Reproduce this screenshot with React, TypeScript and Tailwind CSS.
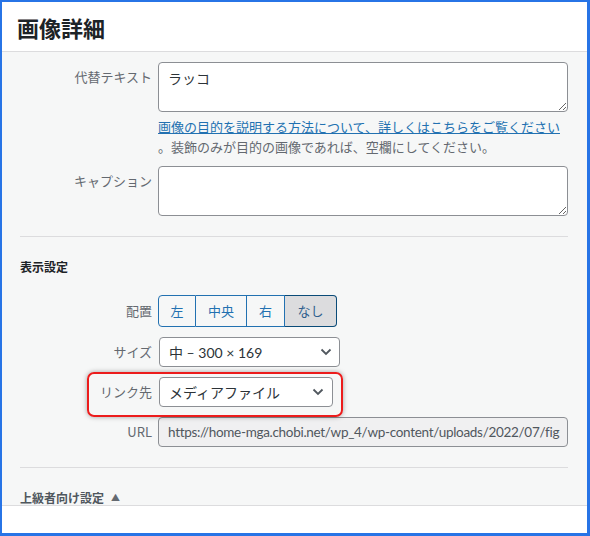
import React from "react";

const FONT = '"Noto Sans CJK JP", "Noto Sans", sans-serif';
const LATIN = 'Lato, "Noto Sans CJK JP", sans-serif';

function Chevron() {
  return (
    <svg width="12" height="8" viewBox="0 0 12 8" fill="none">
      <path d="M1.5 1.5 L6 6 L10.5 1.5" stroke="#50575e" strokeWidth="1.8" />
    </svg>
  );
}

function Label({ children, pt = "pt-[5px]" }: { children: React.ReactNode; pt?: string }) {
  return (
    <div className={`w-[138px] shrink-0 pr-[6px] text-right text-[13px] leading-[20px] text-[#646970] ${pt}`}>
      {children}
    </div>
  );
}

export default function App() {
  return (
    <div
      className="w-[590px] h-[536px] flex flex-col overflow-hidden bg-white border-l-2 border-t-2 border-r-[3px] border-b-[3px] border-[#2774e6]"
      style={{ fontFamily: FONT }}
    >
      <header className="h-[50px] shrink-0 border-b border-[#dcdcde] flex items-center pl-[15px]">
        <h1 className="text-[22px] font-bold leading-none text-[#1d2327]">画像詳細</h1>
      </header>

      <main className="h-[454px] shrink-0 overflow-hidden bg-[#f6f7f7] border-b border-[#dcdcde] pl-[18px] pr-[19px] pt-[10px]">
        {/* Alt text */}
        <div className="flex">
          <Label>代替テキスト</Label>
          <textarea
            readOnly
            defaultValue="ラッコ"
            className="flex-1 h-[50px] bg-white border border-[#8c8f94] rounded-[4px] pl-[9px] pt-[5px] text-[14px] leading-[20px] text-[#2c3338] outline-none"
            style={{ fontFamily: FONT }}
          />
        </div>
        <div className="ml-[138px] mt-[5px] text-[13px] leading-[20px] text-[#646970]">
          <a className="text-[#2271b1] underline">画像の目的を説明する方法について、詳しくはこちらをご覧ください</a>
          <br />
          。装飾のみが目的の画像であれば、空欄にしてください。
        </div>

        {/* Caption */}
        <div className="flex mt-[9px]">
          <Label>キャプション</Label>
          <textarea
            readOnly
            defaultValue=""
            className="flex-1 h-[50px] bg-white border border-[#8c8f94] rounded-[4px] pl-[9px] pt-[5px] text-[14px] leading-[20px] text-[#2c3338] outline-none"
            style={{ fontFamily: FONT }}
          />
        </div>

        <div className="mt-[20px] h-px bg-[#dcdcde]" />

        <h2 className="mt-[20px] text-[12px] leading-[20px] font-semibold text-[#1d2327]">表示設定</h2>

        {/* Align */}
        <div className="flex mt-[18px]">
          <Label pt="pt-[6px]">配置</Label>
          <div className="flex h-[32px] text-[13px] text-[#2271b1]">
            <div className="w-[38px] flex items-center justify-center border border-[#2271b1] rounded-l-[4px] bg-[#f6f7f7]">左</div>
            <div className="w-[51px] flex items-center justify-center border-y border-r border-[#2271b1] bg-[#f6f7f7]">中央</div>
            <div className="w-[38px] flex items-center justify-center border-y border-r border-[#2271b1] bg-[#f6f7f7]">右</div>
            <div className="w-[52px] flex items-center justify-center border border-l-0 border-[#0a4b78] rounded-r-[4px] bg-[#dcdcde] text-[#2f5f8d]">なし</div>
          </div>
        </div>

        {/* Size */}
        <div className="flex mt-[10px]">
          <Label>サイズ</Label>
          <div
            className="ml-px w-[181px] h-[30px] bg-white border border-[#8c8f94] rounded-[4px] flex items-center justify-between pl-[9px] pr-[7px] text-[14px] text-[#2c3338]"
            style={{ fontFamily: LATIN }}
          >
            <span>中 – 300 × 169</span>
            <Chevron />
          </div>
        </div>

        {/* Link */}
        <div className="relative flex mt-[10px]">
          <div className="absolute left-[67px] top-[-5px] w-[256px] h-[45px] rounded-[7px] border-2 border-[#ec1c1c] shadow-[0_0_5px_rgba(0,0,0,0.35)]" />
          <Label>リンク先</Label>
          <div className="ml-px w-[174px] h-[30px] bg-white border border-[#8c8f94] rounded-[4px] flex items-center justify-between pl-[9px] pr-[8px] text-[14px] text-[#2c3338]">
            <span>メディアファイル</span>
            <Chevron />
          </div>
        </div>

        {/* URL */}
        <div className="flex mt-[10px]">
          <Label>URL</Label>
          <div
            className="flex-1 min-w-0 h-[30px] bg-[#f0f0f1] border border-[#8c8f94] rounded-[4px] flex items-center pl-[9px] pr-[7px] overflow-hidden whitespace-nowrap text-[13.5px] tracking-[-0.3px] text-[#50575e]"
            style={{ fontFamily: LATIN }}
          >
            <span className="overflow-hidden">https://home-mga.chobi.net/wp_4/wp-content/uploads/2022/07/fig-otter.jpg</span>
          </div>
        </div>

        <div className="mt-[20px] h-px bg-[#dcdcde]" />

        <h2 className="mt-[20px] flex items-center gap-[7px] text-[12px] leading-[20px] font-semibold text-[#50575e]">
          上級者向け設定
          <span className="text-[9px] text-[#646970]">▲</span>
        </h2>
      </main>

      <footer className="flex-1 bg-white" />
    </div>
  );
}
